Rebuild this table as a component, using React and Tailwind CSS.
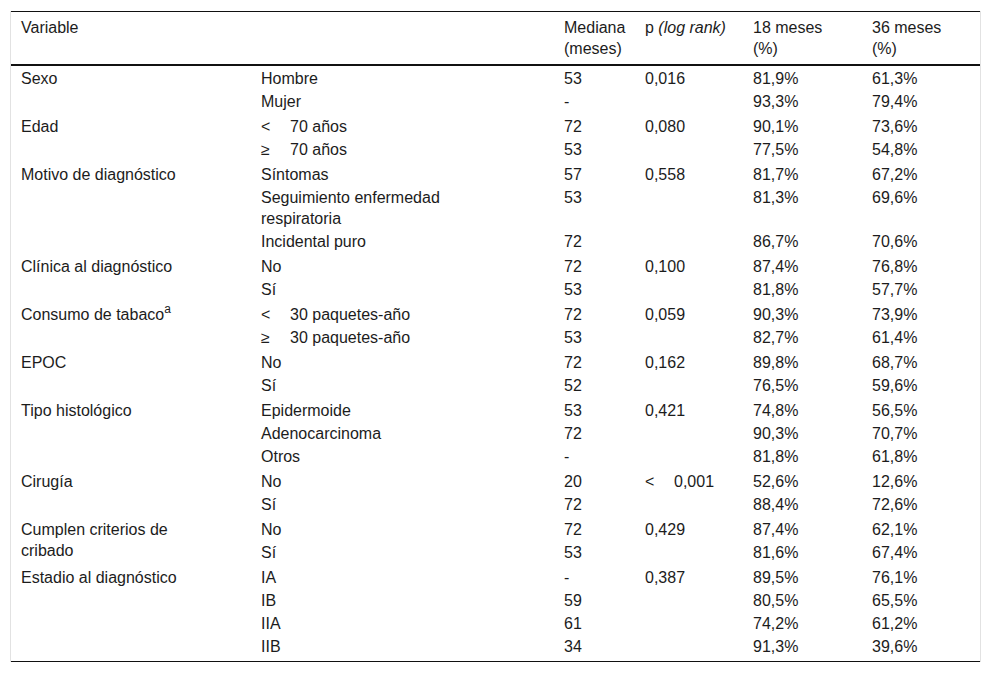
import React from "react";

const lt = (sym, rest) => (
  <>
    <span className="inline-block w-[29px]">{sym}</span>
    {rest}
  </>
);

const groups = [
  { v: "Sexo", rows: [["Hombre", "53", "0,016", "81,9%", "61,3%"], ["Mujer", "-", "", "93,3%", "79,4%"]] },
  { v: "Edad", rows: [[lt("<", "70 años"), "72", "0,080", "90,1%", "73,6%"], [lt("≥", "70 años"), "53", "", "77,5%", "54,8%"]] },
  {
    v: "Motivo de diagnóstico",
    rows: [
      ["Síntomas", "57", "0,558", "81,7%", "67,2%"],
      [<>Seguimiento enfermedad<br />respiratoria</>, "53", "", "81,3%", "69,6%"],
      ["Incidental puro", "72", "", "86,7%", "70,6%"],
    ],
  },
  { v: "Clínica al diagnóstico", rows: [["No", "72", "0,100", "87,4%", "76,8%"], ["Sí", "53", "", "81,8%", "57,7%"]] },
  {
    v: <>Consumo de tabaco<sup className="text-[12px] top-[-0.6em]">a</sup></>,
    rows: [[lt("<", "30 paquetes-año"), "72", "0,059", "90,3%", "73,9%"], [lt("≥", "30 paquetes-año"), "53", "", "82,7%", "61,4%"]],
  },
  { v: "EPOC", rows: [["No", "72", "0,162", "89,8%", "68,7%"], ["Sí", "52", "", "76,5%", "59,6%"]] },
  {
    v: "Tipo histológico",
    rows: [
      ["Epidermoide", "53", "0,421", "74,8%", "56,5%"],
      ["Adenocarcinoma", "72", "", "90,3%", "70,7%"],
      ["Otros", "-", "", "81,8%", "61,8%"],
    ],
  },
  { v: "Cirugía", rows: [["No", "20", lt("<", "0,001"), "52,6%", "12,6%"], ["Sí", "72", "", "88,4%", "72,6%"]] },
  { v: <>Cumplen criterios de<br />cribado</>, rows: [["No", "72", "0,429", "87,4%", "62,1%"], ["Sí", "53", "", "81,6%", "67,4%"]] },
  {
    v: "Estadio al diagnóstico",
    rows: [
      ["IA", "-", "0,387", "89,5%", "76,1%"],
      ["IB", "59", "", "80,5%", "65,5%"],
      ["IIA", "61", "", "74,2%", "61,2%"],
      ["IIB", "34", "", "91,3%", "39,6%"],
    ],
  },
];

export default function App() {
  return (
    <div className="bg-white w-[992px] h-[674px] pt-[11px] pl-[10px] text-[#1c1c1c]" style={{ fontFamily: '"Liberation Sans", Arial, sans-serif' }}>
      <div className="w-[971px] border-x border-[#e2e2e2]">
        <table className="w-full table-fixed border-collapse text-[16px] leading-[21px]">
          <colgroup>
            <col className="w-[240px]" />
            <col className="w-[303px]" />
            <col className="w-[81px]" />
            <col className="w-[108px]" />
            <col className="w-[119px]" />
            <col />
          </colgroup>
          <thead>
            <tr className="border-t border-b-2 border-[#111] align-top text-left">
              <th className="font-normal pl-[10px] pt-[5px] pb-[5px]">Variable</th>
              <th className="font-normal pl-[10px] pt-[5px] pb-[5px]"></th>
              <th className="font-normal pl-[10px] pt-[5px] pb-[5px]">Mediana<br />(meses)</th>
              <th className="font-normal pl-[10px] pt-[5px] pb-[5px]">p <i>(log rank)</i></th>
              <th className="font-normal pl-[10px] pt-[5px] pb-[5px]">18 meses<br />(%)</th>
              <th className="font-normal pl-[10px] pt-[5px] pb-[5px]">36 meses<br />(%)</th>
            </tr>
          </thead>
          <tbody className="border-b border-[#111]">
            {groups.map((g, gi) =>
              g.rows.map((r, ri) => {
                const first = ri === 0;
                const lastAll = gi === groups.length - 1 && ri === g.rows.length - 1;
                const pt = first ? "pt-[2px]" : "pt-0";
                const pb = lastAll ? "pb-[4px]" : "pb-[2px]";
                const cls = `pl-[10px] align-top ${pt} ${pb}`;
                return (
                  <tr key={`${gi}-${ri}`}>
                    {first && (
                      <td rowSpan={g.rows.length} className="pl-[10px] align-top pt-[2px]">
                        {g.v}
                      </td>
                    )}
                    {r.map((c, ci) => (
                      <td key={ci} className={cls}>
                        {c}
                      </td>
                    ))}
                  </tr>
                );
              })
            )}
          </tbody>
        </table>
      </div>
    </div>
  );
}
